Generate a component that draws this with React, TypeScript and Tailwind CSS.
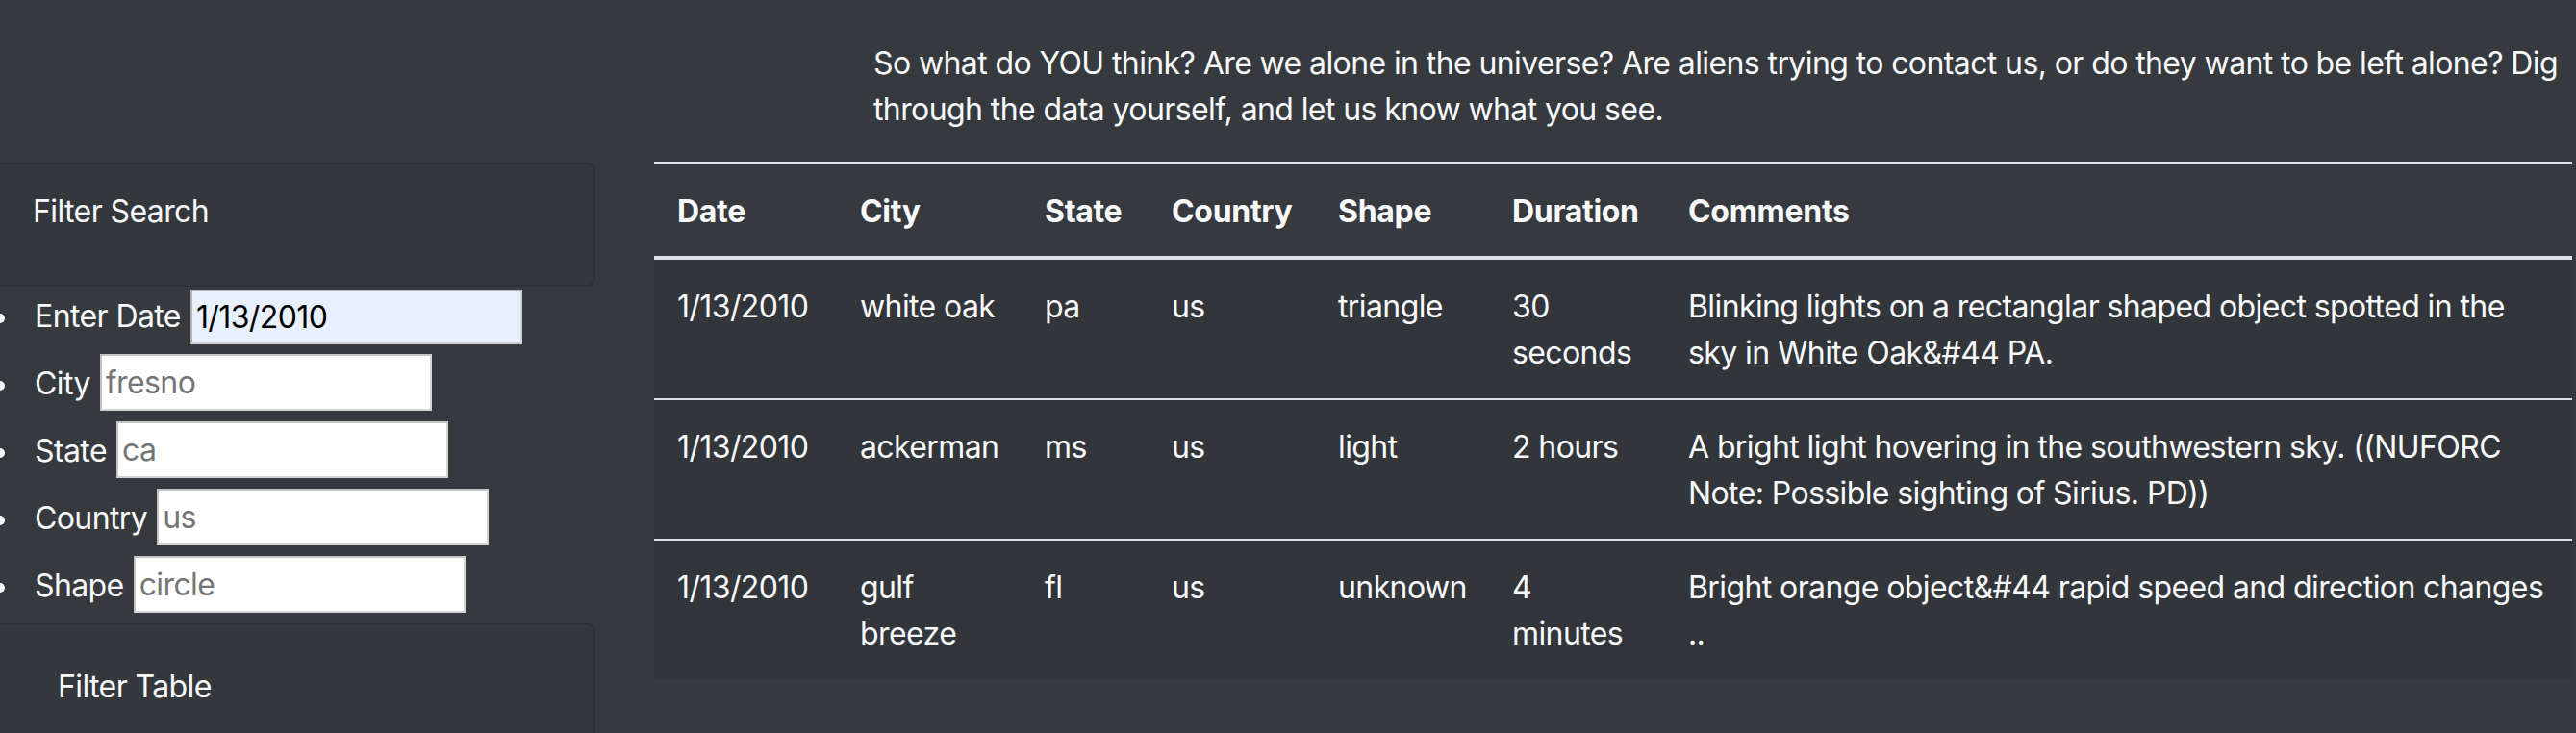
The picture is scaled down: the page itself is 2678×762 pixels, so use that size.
import React from 'react';

type Sighting = {
  datetime: string;
  city: string;
  state: string;
  country: string;
  shape: string;
  duration: string;
  comments: string;
};

const sightings: Sighting[] = [
  {
    datetime: '1/13/2010',
    city: 'white oak',
    state: 'pa',
    country: 'us',
    shape: 'triangle',
    duration: '30 seconds',
    comments: 'Blinking lights on a rectanglar shaped object spotted in the sky in White Oak&#44 PA.',
  },
  {
    datetime: '1/13/2010',
    city: 'ackerman',
    state: 'ms',
    country: 'us',
    shape: 'light',
    duration: '2 hours',
    comments: 'A bright light hovering in the southwestern sky. ((NUFORC Note: Possible sighting of Sirius. PD))',
  },
  {
    datetime: '1/13/2010',
    city: 'gulf breeze',
    state: 'fl',
    country: 'us',
    shape: 'unknown',
    duration: '4 minutes',
    comments: 'Bright orange object&#44 rapid speed and direction changes ..',
  },
];

const filters = [
  { id: 'datetime', label: 'Enter Date', value: '1/13/2010', placeholder: '' },
  { id: 'city', label: 'City', value: '', placeholder: 'fresno' },
  { id: 'state', label: 'State', value: '', placeholder: 'ca' },
  { id: 'country', label: 'Country', value: '', placeholder: 'us' },
  { id: 'shape', label: 'Shape', value: '', placeholder: 'circle' },
];

const App: React.FC = () => {
  return (
    <div className="h-[762px] overflow-hidden bg-[#363a3f] text-[32px] leading-[48px] tracking-[-0.6px] text-[#f8f9fa] font-['Inter','Liberation_Sans',sans-serif]">
      {/* Intro text */}
      <div className="pl-[908px] pr-[4px] pt-[42px]">
        <p>
          So what do YOU think? Are we alone in the universe? Are aliens trying to contact us, or do they want to be
          left alone? Dig through the data yourself, and let us know what you see.
        </p>
      </div>

      <div className="mt-[30px] flex items-start">
        {/* Filters */}
        <aside className="w-[611px] shrink-0">
          <div className="-ml-[8px] mt-[1px] w-[627px] rounded-[8px] border-2 border-[#2d3136] bg-[#34383d] pl-[40px] pt-[25px] pb-[52px]">
            Filter Search
          </div>
          <ul>
            {filters.map((f) => (
              <li key={f.id} className="flex h-[70px] items-start">
                <span className="-ml-[5px] mt-[28px] h-[10px] w-[10px] shrink-0 rounded-full bg-[#f8f9fa]" />
                <label htmlFor={f.id} className="ml-[31px] mt-[7px] whitespace-nowrap">
                  {f.label}
                </label>
                <input
                  id={f.id}
                  type="text"
                  defaultValue={f.value}
                  placeholder={f.placeholder}
                  className={
                    f.value
                      ? 'ml-[10px] mt-[3px] h-[57px] w-[345px] shrink-0 border-2 border-t-[#b4b4b4] border-l-[#b4b4b4] border-r-[#d0d0d0] border-b-[#d0d0d0] bg-[#e8f0fe] px-[4px] text-black outline-none'
                      : 'ml-[10px] mt-[0px] h-[59px] w-[345px] shrink-0 border-2 border-t-[#c4c4c4] border-l-[#c4c4c4] border-r-[#d4d4d4] border-b-[#d4d4d4] bg-white px-[4px] text-black outline-none placeholder:text-[#757575]'
                  }
                />
              </li>
            ))}
          </ul>
          <div className="-ml-[8px] w-[627px] rounded-[8px] border-2 border-[#2d3136] bg-[#34383d] pl-[66px] pt-[40px] pb-[38px]">
            Filter Table
          </div>
        </aside>

        {/* Results */}
        <div className="ml-[69px] w-[1994px] shrink-0">
          <table className="w-full table-fixed border-collapse text-left">
            <colgroup>
              <col className="w-[190px]" />
              <col className="w-[192px]" />
              <col className="w-[132px]" />
              <col className="w-[173px]" />
              <col className="w-[181px]" />
              <col className="w-[183px]" />
              <col />
            </colgroup>
            <thead>
              <tr className="border-t-2 border-b-4 border-[#dee2e6]">
                <th className="px-[24px] pt-[26px] pb-[22px] align-bottom font-bold tracking-[-0.3px]">Date</th>
                <th className="px-[24px] pt-[26px] pb-[22px] align-bottom font-bold tracking-[-0.3px]">City</th>
                <th className="px-[24px] pt-[26px] pb-[22px] align-bottom font-bold tracking-[-0.3px]">State</th>
                <th className="px-[24px] pt-[26px] pb-[22px] align-bottom font-bold tracking-[-0.3px]">Country</th>
                <th className="px-[24px] pt-[26px] pb-[22px] align-bottom font-bold tracking-[-0.3px]">Shape</th>
                <th className="px-[24px] pt-[26px] pb-[22px] align-bottom font-bold tracking-[-0.3px]">Duration</th>
                <th className="px-[24px] pt-[26px] pb-[22px] align-bottom font-bold tracking-[-0.3px]">Comments</th>
              </tr>
            </thead>
            <tbody className="bg-[#32363b]">
              {sightings.map((s, i) => (
                <tr key={i} className={i > 0 ? 'border-t-2 border-[#dee2e6]' : ''}>
                  <td className="h-[144px] px-[24px] pt-[25px] pb-[23px] align-top">{s.datetime}</td>
                  <td className="px-[24px] pt-[25px] pb-[23px] align-top">{s.city}</td>
                  <td className="px-[24px] pt-[25px] pb-[23px] align-top">{s.state}</td>
                  <td className="px-[24px] pt-[25px] pb-[23px] align-top">{s.country}</td>
                  <td className="px-[24px] pt-[25px] pb-[23px] align-top">{s.shape}</td>
                  <td className="px-[24px] pt-[25px] pb-[23px] align-top">{s.duration}</td>
                  <td className="px-[24px] pt-[25px] pb-[23px] align-top">{s.comments}</td>
                </tr>
              ))}
            </tbody>
          </table>
        </div>
      </div>
    </div>
  );
};

export default App;
